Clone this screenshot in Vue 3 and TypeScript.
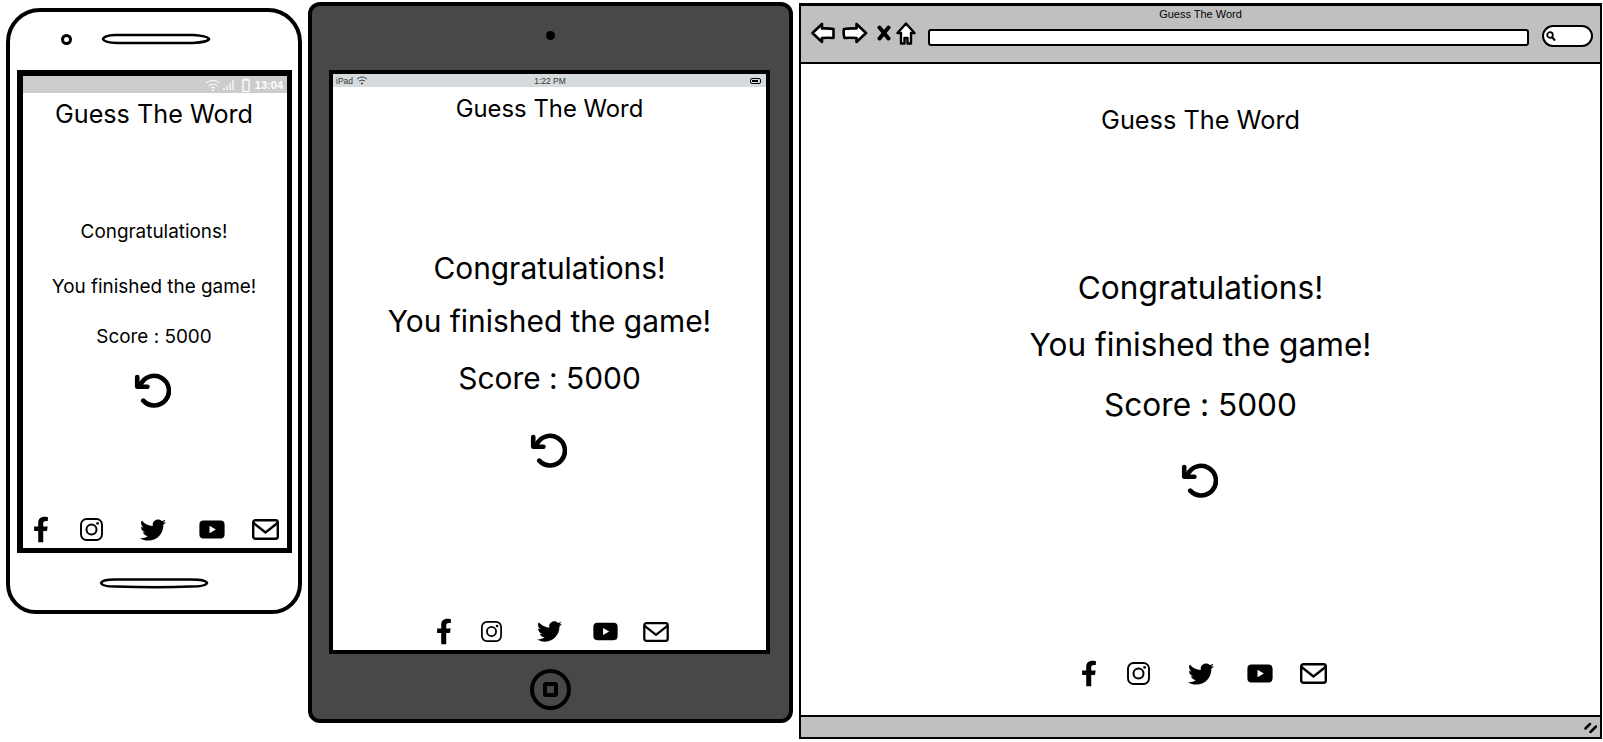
<script setup lang="ts">
const lines: string[] = ['Congratulations!', 'You finished the game!', 'Score : 5000']
const socials: { id: string; w: number; h: number }[] = [
  { id: 'i-fb', w: 16, h: 27 },
  { id: 'i-ig', w: 23, h: 23 },
  { id: 'i-tw', w: 26, h: 26 },
  { id: 'i-yt', w: 26, h: 19 },
  { id: 'i-ml', w: 27, h: 21 },
]
</script>

<template>
  <div class="page">
    <svg class="defs" width="0" height="0" aria-hidden="true">
      <symbol id="i-fb" viewBox="0 0 320 512"><path d="M279.14 288l14.22-92.66h-88.91v-60.13c0-25.35 12.42-50.06 52.24-50.06h40.42V6.26S260.43 0 225.36 0c-73.22 0-121.08 44.38-121.08 124.72v70.62H22.89V288h81.39v224h100.17V288z" /></symbol>
      <symbol id="i-ig" viewBox="0 0 23 23"><rect x="1" y="1" width="21" height="21" rx="5.5" fill="none" stroke="#000" stroke-width="1.9" /><circle cx="11.5" cy="11.5" r="5" fill="none" stroke="#000" stroke-width="2" /><circle cx="17.6" cy="5.4" r="1.4" /></symbol>
      <symbol id="i-tw" viewBox="0 0 512 512"><path d="M459.37 151.716c.325 4.548.325 9.097.325 13.645 0 138.72-105.583 298.558-298.558 298.558-59.452 0-114.68-17.219-161.137-47.106 8.447.974 16.568 1.299 25.34 1.299 49.055 0 94.213-16.568 130.274-44.832-46.132-.975-84.792-31.188-98.112-72.772 6.498.974 12.995 1.624 19.818 1.624 9.421 0 18.843-1.3 27.614-3.573-48.081-9.747-84.143-51.98-84.143-102.985v-1.299c13.969 7.797 30.214 12.67 47.431 13.319-28.264-18.843-46.781-51.005-46.781-87.391 0-19.492 5.197-37.36 14.294-52.954 51.655 63.675 129.3 105.258 216.365 109.807-1.624-7.797-2.599-15.918-2.599-24.04 0-57.828 46.782-104.934 104.934-104.934 30.213 0 57.502 12.67 76.67 33.137 23.715-4.548 46.456-13.32 66.599-25.34-7.798 24.366-24.366 44.833-46.132 57.827 21.117-2.273 41.584-8.122 60.426-16.243-14.292 20.791-32.161 39.308-52.628 54.253z" /></symbol>
      <symbol id="i-yt" viewBox="0 0 26 19"><path fill-rule="evenodd" d="M4.5 0.5H21.5Q25.5 0.5 25.6 4.5V14.5Q25.5 18.5 21.5 18.5H4.5Q0.5 18.5 0.4 14.5V4.5Q0.5 0.5 4.5 0.5ZM10.5 5.8V13.2L16.8 9.5Z" /></symbol>
      <symbol id="i-ml" viewBox="0 0 27 21"><rect x="1.2" y="1.2" width="24.6" height="18.6" rx="2.2" fill="none" stroke="#000" stroke-width="2.4" /><path d="M1.5 4L13.5 13.5L25.5 4" fill="none" stroke="#000" stroke-width="2.4" /></symbol>
      <symbol id="i-replay" viewBox="0 0 40 40"><path d="M7 14A16 16 0 1 1 10 31" fill="none" stroke="#000" stroke-width="5" stroke-linecap="round" /><path d="M3.5 5.5V16H14.5" fill="none" stroke="#000" stroke-width="5" stroke-linecap="round" stroke-linejoin="round" /></symbol>
    </svg>

    <!-- Phone -->
    <section class="device phone">
      <div class="phone-top">
        <span class="camera"></span>
        <svg class="speaker" width="110" height="12" viewBox="0 0 110 12"><path d="M2 6Q3 2.5 14 2H92Q107 3 108 6Q107 9 92 10H16Q3 9.500 2 6Z" fill="#fff" stroke="#000" stroke-width="2.600" /></svg>
      </div>
      <div class="screen">
        <div class="status">
          <svg width="16" height="12" viewBox="0 0 16 12"><path d="M1 4Q8-1 15 4M3.500 6.500Q8 3.500 12.500 6.500M6 9Q8 7.700 10 9" fill="none" stroke="#fff" stroke-width="1" /><circle cx="8" cy="11" r="1" fill="#fff" /></svg>
          <svg class="sig" width="13" height="11" viewBox="0 0 13 11"><path d="M1 11V9M4 11V7M7 11V4M10 11V1" stroke="#fff" stroke-width="1.200" /></svg>
          <svg class="bat" width="8" height="14" viewBox="0 0 8 14"><rect x="1" y="2" width="6" height="11.500" fill="none" stroke="#fff" stroke-width="1.300" /><rect x="2.500" y="0.500" width="3" height="1.500" fill="#fff" /></svg>
          <span>13:04</span>
        </div>
        <h1 class="title">Guess The Word</h1>
        <p v-for="l in lines" :key="l" class="line">{{ l }}</p>
        <svg class="replay"><use href="#i-replay" /></svg>
        <div class="socials">
          <svg v-for="s in socials" :key="s.id" :class="s.id" :width="s.w" :height="s.h"><use :href="'#' + s.id" /></svg>
        </div>
      </div>
      <div class="phone-bottom">
        <svg class="speaker" width="110" height="12" viewBox="0 0 110 12"><path d="M2 6Q3 2.500 16 2.500H92Q107 2.500 108 6Q107 9.500 92 9.500Q60 11 16 9.500Q3 9.500 2 6Z" fill="#fff" stroke="#000" stroke-width="2.600" /></svg>
      </div>
    </section>

    <!-- Tablet -->
    <section class="device tablet">
      <div class="tablet-top"><span class="lens"></span></div>
      <div class="screen">
        <div class="status">
          <span class="carrier">iPad</span>
          <svg width="12" height="9" viewBox="0 0 12 9"><path d="M1 3Q6-1 11 3M3 5Q6 3 9 5" fill="none" stroke="#333" stroke-width="0.900" /><circle cx="6" cy="7.500" r="1" fill="#333" /></svg>
          <span class="clock">1:22 PM</span>
          <span class="battery"><i></i></span>
        </div>
        <h1 class="title">Guess The Word</h1>
        <p v-for="l in lines" :key="l" class="line">{{ l }}</p>
        <svg class="replay"><use href="#i-replay" /></svg>
        <div class="socials">
          <svg v-for="s in socials" :key="s.id" :class="s.id" :width="s.w" :height="s.h"><use :href="'#' + s.id" /></svg>
        </div>
      </div>
      <div class="tablet-bottom"><span class="home"><i></i></span></div>
    </section>

    <!-- Browser -->
    <section class="device browser">
      <header class="chrome">
        <div class="chrome-title">Guess The Word</div>
        <div class="tools">
          <svg width="24" height="22" viewBox="0 0 24 22"><path d="M1.500 11L11 2V6.500Q17 6 22.500 7V16Q17 15.500 11 16V20Z" fill="#fff" stroke="#000" stroke-width="2.600" stroke-linejoin="round" /></svg>
          <svg width="26" height="22" viewBox="0 0 26 22"><path d="M24 11L14.500 2V6.500Q8 6 2 7Q1 11 2.500 16Q8 15.500 14.500 16V20Z" fill="#fff" stroke="#000" stroke-width="2.600" stroke-linejoin="round" /></svg>
          <svg class="tool-x" width="14" height="16" viewBox="0 0 14 16"><path d="M2.500 2.500L11.500 13.500M11.500 2.500L2.500 13.500" stroke="#000" stroke-width="4" stroke-linecap="round" /></svg>
          <svg class="tool-home" width="20" height="23" viewBox="0 0 20 23"><path d="M10 1.500L18.500 11H15V21.500H11.500V16H8.500V21.500H5V11H1.500Z" fill="#fff" stroke="#000" stroke-width="2.400" stroke-linejoin="round" /></svg>
          <div class="url"></div>
          <div class="search">
            <svg width="12" height="12" viewBox="0 0 12 12"><circle cx="5" cy="5" r="2.800" fill="none" stroke="#000" stroke-width="1.800" /><path d="M7 7L10 10.500" stroke="#000" stroke-width="2" /></svg>
          </div>
        </div>
      </header>
      <main class="view">
        <h1 class="title">Guess The Word</h1>
        <p v-for="l in lines" :key="l" class="line">{{ l }}</p>
        <svg class="replay"><use href="#i-replay" /></svg>
        <div class="socials">
          <svg v-for="s in socials" :key="s.id" :class="s.id" :width="s.w" :height="s.h"><use :href="'#' + s.id" /></svg>
        </div>
      </main>
      <footer class="chrome-foot">
        <svg width="13" height="11" viewBox="0 0 13 11"><path d="M1.500 6.500L6 2M6.500 10L12 4.500" stroke="#000" stroke-width="2.500" stroke-linecap="round" /></svg>
      </footer>
    </section>
  </div>
</template>

<style scoped>
.page {
  display: flex;
  align-items: flex-start;
  width: 1603px;
  height: 742px;
  overflow: hidden;
  background: #fff;
  color: #000;
  font-family: "Inter", "Noto Sans", sans-serif;
  font-variant-ligatures: none;
}
.defs { position: absolute; }
.device { box-sizing: border-box; display: flex; flex-direction: column; flex: none; }
.title, .line { margin: 0; text-align: center; font-weight: 400; white-space: nowrap; }
.screen, .view { display: flex; flex-direction: column; align-items: center; background: #fff; }
.status { align-self: stretch; flex: none; display: flex; align-items: center; }
.replay { flex: none; width: 37px; height: 37px; margin-right: 2px; }
.socials { display: flex; align-items: center; margin-top: auto; }
.socials svg { flex: none; display: block; }
.i-ig { margin-left: 30px; }
.i-tw { margin-left: 36px; }
.i-yt { margin-left: 33px; }
.i-ml { margin-left: 27px; }

/* phone */
.phone {
  width: 296px;
  height: 606px;
  margin: 8px 0 0 6px;
  border: 4px solid #000;
  border-radius: 34px 34px 30px 30px;
  background: #fff;
}
.phone-top { height: 58px; flex: none; display: flex; align-items: flex-start; padding: 21px 0 0 50px; box-sizing: border-box; }
.camera { width: 11px; height: 11px; box-sizing: border-box; border: 3px solid #000; border-radius: 50%; margin: 1px 29px 0 1px; }
.phone .screen {
  box-sizing: border-box;
  width: 275px;
  height: 483px;
  margin-left: 7px;
  border: 6px solid #000;
  border-bottom-width: 5px;
  border-right-width: 5px;
}
.phone .status { height: 17px; background: #ccc; color: #fff; justify-content: flex-end; padding-right: 4px; font: 700 11px "Liberation Sans", sans-serif; }
.phone .status .sig { margin-left: 2px; }
.phone .status .bat { margin: 0 5px 0 6px; }
.phone .title { font-size: 25.200px; line-height: 30px; margin-top: 6px; padding-right: 2px; }
.phone .line { font-size: 18.900px; line-height: 24px; padding-right: 2px; }
.phone .line:nth-of-type(1) { margin-top: 91px; }
.phone .line:nth-of-type(2) { margin-top: 31px; }
.phone .line:nth-of-type(3) { margin-top: 26px; }
.phone .replay { margin-top: 23px; margin-right: 6px; }
.phone .socials { margin-bottom: 5px; padding-left: 2px; }
.phone .socials .i-ig { margin-left: 31px; }
.phone .socials .i-tw { margin-left: 37px; }
.phone-bottom { flex: 1; display: flex; justify-content: center; padding-top: 24px; box-sizing: border-box; }

/* tablet */
.tablet {
  width: 485px;
  height: 721px;
  margin: 2px 0 0 6px;
  border: 4px solid #000;
  border-radius: 12px;
  background: #484848;
}
.tablet-top { height: 64px; flex: none; display: flex; justify-content: center; padding-top: 25px; box-sizing: border-box; }
.lens { width: 9px; height: 9px; border-radius: 50%; background: #000; }
.tablet .screen {
  box-sizing: border-box;
  width: 441px;
  height: 584px;
  margin-left: 17px;
  border: 4px solid #000;
}
.tablet .status { height: 13px; background: #d5dbdd; color: #333; font: 400 8.500px "Liberation Sans", sans-serif; padding: 0 5px 0 3px; position: relative; }
.tablet .carrier { margin-right: 3px; }
.tablet .clock { flex: 1; text-align: center; padding-right: 18px; }
.battery { width: 11px; height: 6px; box-sizing: border-box; border: 1px solid #000; border-radius: 2px; display: block; padding: 1px; }
.battery i { display: block; width: 6px; height: 2px; background: #000; }
.tablet .title { font-size: 23.850px; line-height: 30px; margin-top: 7px; }
.tablet .line { font-size: 29.900px; line-height: 38px; }
.tablet .line:nth-of-type(1) { margin-top: 125px; }
.tablet .line:nth-of-type(2) { margin-top: 15px; }
.tablet .line:nth-of-type(3) { margin-top: 19px; }
.tablet .replay { margin-top: 35px; }
.tablet .socials { margin-bottom: 5px; padding-left: 6px; }
.tablet .socials .i-ig { width: 21px; height: 21px; margin-left: 29px; }
.tablet .socials .i-tw { width: 25px; height: 25px; margin-left: 35px; }
.tablet .socials .i-yt { width: 25px; height: 19px; margin-left: 31px; }
.tablet .socials .i-ml { width: 26px; height: 20px; margin-left: 25px; }
.tablet-bottom { flex: 1; display: flex; justify-content: center; padding-top: 15px; box-sizing: border-box; }
.home { width: 41px; height: 41px; box-sizing: border-box; border: 4px solid #000; border-radius: 50%; display: flex; align-items: center; justify-content: center; }
.home i { display: block; width: 15px; height: 15px; box-sizing: border-box; border: 4px solid #000; border-radius: 3px; }

/* browser */
.browser {
  width: 803px;
  height: 736px;
  margin: 3px 0 0 6px;
  border: 2px solid #000;
  border-top-width: 3px;
  background: #fff;
}
.chrome { height: 58px; flex: none; box-sizing: border-box; background: #c0c0c0; border-bottom: 2px solid #000; }
.chrome-title { font: 400 11px/13px "Liberation Sans", sans-serif; text-align: center; padding-top: 2px; }
.tools { display: flex; align-items: flex-start; height: 24px; margin-top: 1px; padding-left: 10px; }
.tools svg { flex: none; display: block; }
.tools svg:nth-child(2) { margin-left: 7px; }
.tool-x { margin: 3px 0 0 9px; }
.tool-home { margin-left: 5px; }
.url { width: 601px; height: 17px; margin: 7px 0 0 12px; box-sizing: border-box; background: #fff; border: 2px solid #000; border-radius: 3px; }
.search { width: 51px; height: 22px; margin: 3px 0 0 13px; box-sizing: border-box; background: #fff; border: 2px solid #000; border-radius: 11px; display: flex; align-items: center; padding-left: 1px; }
.view { flex: 1; min-height: 0; }
.browser .title { font-size: 25.300px; line-height: 30px; margin-top: 41px; }
.browser .line { font-size: 31.600px; line-height: 40px; }
.browser .line:nth-of-type(1) { margin-top: 133px; }
.browser .line:nth-of-type(2) { margin-top: 17px; }
.browser .line:nth-of-type(3) { margin-top: 20px; }
.browser .replay { margin-top: 37px; }
.browser .socials { margin-bottom: 28px; padding-left: 6px; }
.browser .socials .i-tw { margin-left: 38px; }
.chrome-foot { height: 22px; flex: none; box-sizing: border-box; background: #c0c0c0; border-top: 2px solid #000; display: flex; justify-content: flex-end; align-items: center; padding-right: 3px; }
</style>

<style>
html, body { margin: 0; background: #fff; }
</style>
